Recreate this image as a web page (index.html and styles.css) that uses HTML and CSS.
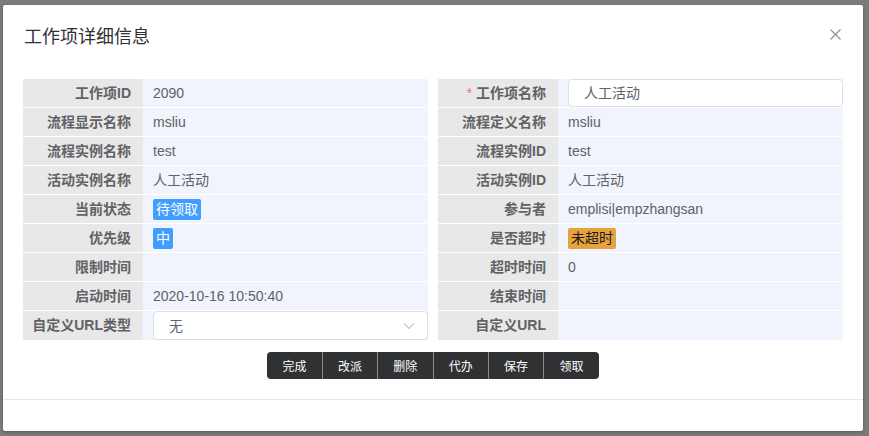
FILE: index.html
```html
<!DOCTYPE html>
<html lang="zh-CN">
<head>
    <meta charset="UTF-8">
    <title>工作项详细信息</title>
    <link rel="stylesheet" href="styles.css">
</head>
<body>
    <div class="dialog">
        <div class="dialog-header">
            <span class="dialog-title">工作项详细信息</span>
            <button class="dialog-close" aria-label="关闭">
                <svg width="11" height="11" viewBox="0 0 11 11"><path d="M0.5 0.5 L10.5 10.5 M10.5 0.5 L0.5 10.5" stroke="#909399" stroke-width="1.2" fill="none"/></svg>
            </button>
        </div>

        <div class="dialog-body">
            <div class="info-grid">
                <div class="info-table">
                    <div class="row"><div class="label">工作项ID</div><div class="value">2090</div></div>
                    <div class="row"><div class="label">流程显示名称</div><div class="value">msliu</div></div>
                    <div class="row"><div class="label">流程实例名称</div><div class="value">test</div></div>
                    <div class="row"><div class="label">活动实例名称</div><div class="value">人工活动</div></div>
                    <div class="row"><div class="label">当前状态</div><div class="value"><span class="tag tag-blue">待领取</span></div></div>
                    <div class="row"><div class="label">优先级</div><div class="value"><span class="tag tag-blue">中</span></div></div>
                    <div class="row"><div class="label">限制时间</div><div class="value"></div></div>
                    <div class="row"><div class="label">启动时间</div><div class="value">2020-10-16 10:50:40</div></div>
                    <div class="row row-last">
                        <div class="label">自定义URL类型</div>
                        <div class="value">
                            <div class="select">
                                <span>无</span>
                                <svg width="12" height="8" viewBox="0 0 12 8"><path d="M1 1.5 L6 6.5 L11 1.5" stroke="#c0c4cc" stroke-width="1.1" fill="none"/></svg>
                            </div>
                        </div>
                    </div>
                </div>

                <div class="info-table">
                    <div class="row">
                        <div class="label"><span class="required">*</span> 工作项名称</div>
                        <div class="value"><input class="text-input" type="text" value="人工活动"></div>
                    </div>
                    <div class="row"><div class="label">流程定义名称</div><div class="value">msliu</div></div>
                    <div class="row"><div class="label">流程实例ID</div><div class="value">test</div></div>
                    <div class="row"><div class="label">活动实例ID</div><div class="value">人工活动</div></div>
                    <div class="row"><div class="label">参与者</div><div class="value">emplisi|empzhangsan</div></div>
                    <div class="row"><div class="label">是否超时</div><div class="value"><span class="tag tag-orange">未超时</span></div></div>
                    <div class="row"><div class="label">超时时间</div><div class="value">0</div></div>
                    <div class="row"><div class="label">结束时间</div><div class="value"></div></div>
                    <div class="row row-last"><div class="label">自定义URL</div><div class="value"></div></div>
                </div>
            </div>

            <div class="actions">
                <div class="btn-group">
                    <button>完成</button>
                    <button>改派</button>
                    <button>删除</button>
                    <button>代办</button>
                    <button>保存</button>
                    <button>领取</button>
                </div>
            </div>
        </div>

        <div class="dialog-footer"></div>
    </div>
</body>
</html>
```

FILE: styles.css
```css
body {
    margin: 0;
    background: #7b7b7b;
    font-family: "Liberation Sans", "Noto Sans CJK SC", sans-serif;
    font-size: 14px;
    color: #606266;
    height: 436px;
    overflow: hidden;
}

.dialog {
    margin: 5px 0 0 3px;
    width: 860px;
    height: 426px;
    background: #fff;
    border-radius: 2px;
    box-shadow: 0 1px 3px rgba(0,0,0,0.3);
    display: flex;
    flex-direction: column;
}

.dialog-header {
    padding: 20px 20px 10px;
    display: flex;
    justify-content: space-between;
    align-items: center;
}

.dialog-title {
    font-size: 18px;
    line-height: 24px;
    color: #303133;
    padding-left: 1px;
}

.dialog-close {
    border: none;
    background: none;
    padding: 0;
    margin-right: 2px;
    margin-top: -6px;
    cursor: pointer;
    display: flex;
}

.dialog-body {
    padding: 20px 20px 20px;
}

.info-grid {
    display: grid;
    grid-template-columns: 1fr 1fr;
    gap: 10px;
}

.row {
    display: flex;
    height: 28px;
    margin-bottom: 1px;
}

.row-last {
    height: 29px;
    margin-bottom: 0;
}

.label {
    width: 120px;
    flex-shrink: 0;
    background: #e8e8e8;
    text-align: right;
    padding-right: 12px;
    box-sizing: border-box;
    font-weight: bold;
    line-height: 28px;
    color: #606266;
}

.required {
    color: #f56c6c;
    font-weight: normal;
}

.value {
    flex: 1;
    background: #f1f4fc;
    padding-left: 10px;
    display: flex;
    align-items: center;
    line-height: 28px;
}

.tag {
    display: inline-block;
    padding: 0 3px;
    line-height: 21px;
    border-radius: 2px;
}

.tag-blue {
    background: #409eff;
    color: #fff;
}

.tag-orange {
    background: #e6a23c;
    color: #1a1a1a;
}

.text-input {
    width: 100%;
    height: 28px;
    box-sizing: border-box;
    border: 1px solid #dcdfe6;
    border-radius: 4px;
    padding: 0 15px;
    font: inherit;
    color: #606266;
    background: #fff;
    outline: none;
}

.select {
    width: 100%;
    height: 29px;
    box-sizing: border-box;
    border: 1px solid #dcdfe6;
    border-radius: 4px;
    padding: 0 12px 0 15px;
    background: #fff;
    display: flex;
    justify-content: space-between;
    align-items: center;
}

.actions {
    display: flex;
    justify-content: center;
    margin-top: 12px;
}

.btn-group {
    display: flex;
    background: #303133;
    border-radius: 4px;
    overflow: hidden;
}

.btn-group button {
    border: none;
    background: none;
    color: #fff;
    font-family: "Noto Sans CJK SC", sans-serif;
    font-size: 12px;
    height: 27px;
    padding: 0 15.2px;
    cursor: pointer;
}

.btn-group button + button {
    border-left: 1px solid #8a8a8a;
}

.dialog-footer {
    border-top: 1px solid #e4e7ed;
    flex: 1;
}
```
